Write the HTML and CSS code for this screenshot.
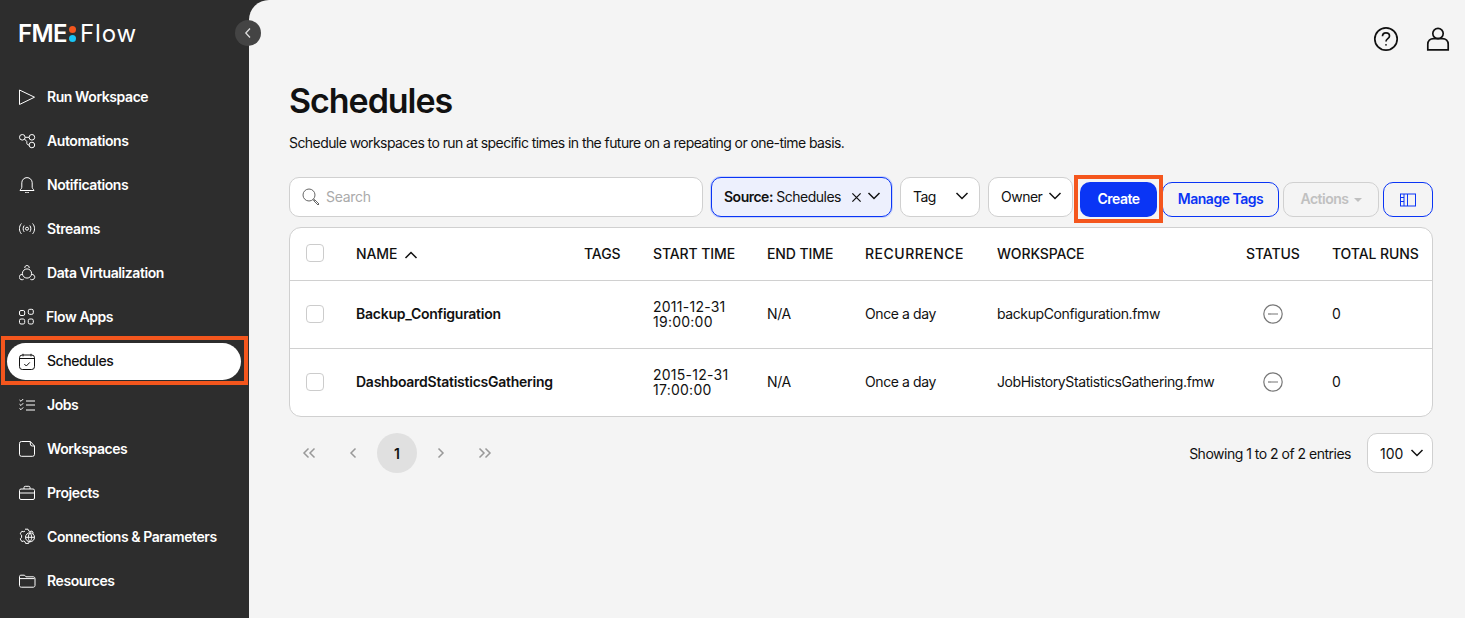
FILE: index.html
```html
<!DOCTYPE html>
<html lang="en">
<head>
    <meta charset="UTF-8">
    <title>Schedules - FME Flow</title>
    <link rel="stylesheet" href="styles.css">
</head>
<body>
    <aside class="sidebar">
        <div class="logo">
            <span class="logo-fme">FME</span>
            <span class="logo-dots"><i class="dot-orange"></i><i class="dot-cyan"></i></span>
            <span class="logo-flow">Flow</span>
        </div>
        <button class="collapse">
            <svg width="16" height="16" viewBox="0 0 16 16"><path d="M10 3.5 5.8 8l4.2 4.5"/></svg>
        </button>
        <nav class="nav">
            <a class="nav-item">
                <svg class="nav-icon" viewBox="0 0 18 18"><path d="M.5 3v14.500L15.500 10.200z"/></svg>
                Run Workspace
            </a>
            <a class="nav-item">
                <svg class="nav-icon" viewBox="0 0 18 18"><circle cx="3.300" cy="6.300" r="2.800"/><circle cx="12.900" cy="6.300" r="2.800"/><circle cx="12.900" cy="14" r="2.800"/><path d="M6.100 6.300h4M5.500 8 7.800 10.500v1.300c0 1.500.8 2.200 2.300 2.200"/></svg>
                Automations
            </a>
            <a class="nav-item">
                <svg class="nav-icon" viewBox="0 0 18 18"><path d="M1 15.500h14c-.3-1.300-1.600-1.500-1.800-3.200V7.800a5.200 5.200 0 0 0-10.400 0v4.500c-.2 1.700-1.500 1.900-1.800 3.200zM6 17.300c.8.800 3.200.8 4 0"/></svg>
                Notifications
            </a>
            <a class="nav-item">
                <svg class="nav-icon" viewBox="0 0 18 18"><circle cx="8" cy="9.700" r="1.500"/><path d="M5.200 6.500c-1.400 1.800-1.400 4.600 0 6.400M10.800 6.500c1.400 1.800 1.400 4.600 0 6.400M2.400 4.500c-2.600 3-2.600 7.400 0 10.400M13.600 4.500c2.600 3 2.600 7.400 0 10.400"/></svg>
                Streams
            </a>
            <a class="nav-item">
                <svg class="nav-icon" viewBox="0 0 18 18"><circle cx="8" cy="10.500" r="4.600"/><path d="M5.800 5c-.2-1.600 1-2.500 2.200-2.500s2.400.9 2.200 2.500M3.400 11.200C1.500 11.400 0 12.600.3 14.500c.3 2 2.600 3 4.400 1.700M12.600 11.200c1.900.2 3.400 1.400 3.100 3.300-.3 2-2.600 3-4.400 1.700"/></svg>
                Data Virtualization
            </a>
            <a class="nav-item nav-item-apps">
                <svg class="nav-icon" viewBox="0 0 18 18"><rect x=".5" y="3.500" width="5.200" height="5" rx="1.500"/><rect x="9.300" y="2.300" width="5" height="5" rx="1.500"/><rect x=".5" y="12" width="5.200" height="5" rx="1.500"/><rect x="9.300" y="12" width="5" height="5" rx="1.500"/></svg>
                Flow Apps
            </a>
            <div class="nav-mark">
                <a class="nav-item nav-item-active">
                    <svg class="nav-icon" viewBox="0 0 18 18"><rect x=".5" y="3" width="15" height="14.500" rx="2.800"/><path d="M.5 6.500h15M4 1.800v2.600M12 1.800v2.600M5.300 12l2 2 3.500-3.600"/></svg>
                    Schedules
                </a>
            </div>
            <a class="nav-item">
                <svg class="nav-icon" viewBox="0 0 18 18"><path d="m.5 5 1.500 1.300L4.200 4M.5 9.200 2 10.500l2.200-2.300M.5 13.400 2 14.700l2.200-2.300M7 6h9M7 10h9M7 15h9"/></svg>
                Jobs
            </a>
            <a class="nav-item">
                <svg class="nav-icon" viewBox="0 0 18 18"><path d="M2.500 2.500h8.800l4.200 4.500v8.300a2 2 0 0 1-2 2h-11a2 2 0 0 1-2-2V4.500a2 2 0 0 1 2-2zM11.300 2.500v2.500a2 2 0 0 0 2 2h2.200"/></svg>
                Workspaces
            </a>
            <a class="nav-item">
                <svg class="nav-icon" viewBox="0 0 18 18"><rect x=".5" y="6" width="15" height="10.500" rx="1.500"/><path d="M.5 10h15M5 6V4.500c0-.8.500-1.200 1.200-1.200h3.600c.7 0 1.200.4 1.200 1.200V6"/></svg>
                Projects
            </a>
            <a class="nav-item">
                <svg class="nav-icon" viewBox="0 0 18 18"><path d="M6 2.200h3l.6 1.600c.5.2 1 .4 1.400.7l2-.5 1.500 2.400M2.800 4.300l2 .4c.4-.3.7-.5 1.200-.7M2.800 4.300 1.200 6.800l1.400 1.400v2.400l-1.400 1.300 1.600 2.600 2-.5c.4.300.8.500 1.200.7l.6 1.700h3l.6-1.700"/><circle cx="11" cy="10.300" r="4.500"/><path d="M6.500 10.300h9M11 5.800c-2.200 2.600-2.200 6.400 0 9M11 5.800c2.200 2.600 2.200 6.400 0 9"/></svg>
                Connections &amp; Parameters
            </a>
            <a class="nav-item">
                <svg class="nav-icon" viewBox="0 0 18 18"><path d="M.5 5.500c0-.8.500-1.300 1.300-1.300h3.700l1.500 1.600h7.200c1.100 0 1.800.7 1.800 1.800v6.800c0 1.100-.7 1.800-1.800 1.800H2.300c-1.100 0-1.800-.7-1.800-1.800zM.5 7.600h15"/></svg>
                Resources
            </a>
        </nav>
    </aside>

    <main class="main">
        <header class="topbar">
            <svg class="top-icon" viewBox="0 0 26 26"><circle cx="13" cy="13" r="11.200"/><path d="M9.500 10.300c0-2.200 1.600-3.500 3.500-3.500s3.500 1.300 3.500 3.200c0 2.600-3.500 2.700-3.500 5.400"/><circle class="solid" cx="13" cy="18.800" r=".9"/></svg>
            <svg class="top-icon" viewBox="0 0 26 26"><circle cx="13" cy="7.500" r="5.200"/><path d="M2.800 23.800v-5.500c0-3.400 2.400-5.600 5.800-5.600h8.800c3.400 0 5.800 2.200 5.800 5.600v5.500z"/></svg>
        </header>

        <h1 class="title">Schedules</h1>
        <p class="subtitle">Schedule workspaces to run at specific times in the future on a repeating or one-time basis.</p>

        <div class="toolbar">
            <div class="search">
                <svg width="20" height="20" viewBox="0 0 20 20"><circle cx="8" cy="8" r="6"/><path d="m12.500 12.500 1.300 1.300M13.500 12.500l-1 1 4.500 4.500 1-1z"/></svg>
                <span>Search</span>
            </div>
            <div class="filter filter-active">
                <span class="filter-label"><b>Source:</b> Schedules</span>
                <svg class="clear" width="11" height="11" viewBox="0 0 12 12"><path d="m1.500 1.500 9 9M10.500 1.500l-9 9"/></svg>
                <svg class="chevron" width="14" height="8" viewBox="0 0 14 8"><path d="m1.500 1 5.500 5.500L12.500 1"/></svg>
            </div>
            <div class="filter filter-tag">
                <span class="filter-label">Tag</span>
                <svg class="chevron" width="14" height="8" viewBox="0 0 14 8"><path d="m1.500 1 5.500 5.500L12.500 1"/></svg>
            </div>
            <div class="filter filter-owner">
                <span class="filter-label">Owner</span>
                <svg class="chevron" width="14" height="8" viewBox="0 0 14 8"><path d="m1.500 1 5.500 5.500L12.500 1"/></svg>
            </div>
            <div class="create-mark">
                <button class="btn btn-primary">Create</button>
            </div>
            <button class="btn btn-outline btn-tags">Manage Tags</button>
            <button class="btn btn-disabled">Actions <i class="caret"></i></button>
            <button class="btn btn-outline btn-columns">
                <svg width="18" height="14" viewBox="0 0 18 14"><rect x="1.500" y="1" width="15" height="12"/><path d="M5 1v12M8.500 1v12M1.500 4.500H5M1.500 8.500H5"/></svg>
            </button>
        </div>

        <div class="table-wrap">
            <table class="table">
                <colgroup>
                    <col class="col-check"><col class="col-name"><col class="col-tags"><col class="col-start"><col class="col-end"><col class="col-rec"><col class="col-ws"><col class="col-status"><col>
                </colgroup>
                <thead>
                    <tr>
                        <th><span class="checkbox"></span></th>
                        <th>NAME <svg class="sort" width="14" height="8" viewBox="0 0 14 8"><path d="m1.500 7 5.500-5.500L12.500 7"/></svg></th>
                        <th>TAGS</th>
                        <th>START TIME</th>
                        <th>END TIME</th>
                        <th class="wide">RECURRENCE</th>
                        <th>WORKSPACE</th>
                        <th>STATUS</th>
                        <th>TOTAL RUNS</th>
                    </tr>
                </thead>
                <tbody>
                    <tr>
                        <td><span class="checkbox"></span></td>
                        <td class="name">Backup_Configuration</td>
                        <td></td>
                        <td class="time">2011-12-31<br>19:00:00</td>
                        <td>N/A</td>
                        <td>Once a day</td>
                        <td>backupConfiguration.fmw</td>
                        <td class="status"><svg width="20" height="20" viewBox="0 0 20 20"><circle cx="10" cy="10" r="9.200"/><path d="M5 10h10"/></svg></td>
                        <td>0</td>
                    </tr>
                    <tr>
                        <td><span class="checkbox"></span></td>
                        <td class="name">DashboardStatisticsGathering</td>
                        <td></td>
                        <td class="time">2015-12-31<br>17:00:00</td>
                        <td>N/A</td>
                        <td>Once a day</td>
                        <td>JobHistoryStatisticsGathering.fmw</td>
                        <td class="status"><svg width="20" height="20" viewBox="0 0 20 20"><circle cx="10" cy="10" r="9.200"/><path d="M5 10h10"/></svg></td>
                        <td>0</td>
                    </tr>
                </tbody>
            </table>
        </div>

        <div class="footer">
            <div class="pager">
                <span class="page-link"><svg width="14" height="12" viewBox="0 0 14 12"><path d="M6.500 1.500 2 6l4.500 4.500M12.500 1.500 8 6l4.500 4.500"/></svg></span>
                <span class="page-link"><svg width="14" height="12" viewBox="0 0 14 12"><path d="M9.500 1.500 5 6l4.500 4.500"/></svg></span>
                <span class="page-current">1</span>
                <span class="page-link"><svg width="14" height="12" viewBox="0 0 14 12"><path d="M4.500 1.500 9 6l-4.500 4.500"/></svg></span>
                <span class="page-link"><svg width="14" height="12" viewBox="0 0 14 12"><path d="M1.500 1.500 6 6l-4.500 4.500M7.500 1.500 12 6l-4.500 4.500"/></svg></span>
            </div>
            <div class="entries">
                <span>Showing 1 to 2 of 2 entries</span>
                <div class="page-size">
                    <span>100</span>
                    <svg class="chevron" width="14" height="8" viewBox="0 0 14 8"><path d="m1.500 1 5.500 5.500L12.500 1"/></svg>
                </div>
            </div>
        </div>
    </main>
</body>
</html>
```

FILE: styles.css
```css
* {
    box-sizing: border-box;
}

html, body {
    height: 100%;
}

body {
    margin: 0;
    display: flex;
    overflow: hidden;
    background-color: #2d2d2d;
    color: #111;
    font-family: 'Inter', 'Liberation Sans', sans-serif;
    font-size: 14px;
}

svg {
    fill: none;
    stroke: currentColor;
    flex-shrink: 0;
}

/* --- Sidebar --- */
.sidebar {
    position: relative;
    width: 249px;
    flex-shrink: 0;
    color: #fff;
}

.logo {
    display: flex;
    align-items: center;
    height: 20px;
    margin: 24px 0 0 18px;
    font-size: 24px;
    line-height: 20px;
}

.logo-fme {
    font-weight: 600;
    letter-spacing: -0.6px;
}

.logo-flow {
    font-weight: 400;
    letter-spacing: 0.9px;
}

.logo-dots {
    display: flex;
    flex-direction: column;
    gap: 2px;
    margin: 0 4px 0 2px;
}

.logo-dots i {
    display: block;
    width: 7px;
    height: 7px;
    border-radius: 50%;
}

.dot-orange {
    background-color: #f4561d;
}

.dot-cyan {
    background-color: #19c5f5;
}

.collapse {
    position: absolute;
    top: 20px;
    left: 235px;
    width: 26px;
    height: 26px;
    display: flex;
    align-items: center;
    justify-content: center;
    padding: 0;
    border: 0;
    border-radius: 50%;
    background-color: #444;
    color: #ddd;
    z-index: 2;
}

.collapse path {
    stroke-width: 1.300;
}

.nav {
    margin-top: 30px;
}

.nav-item {
    display: flex;
    align-items: center;
    gap: 10px;
    height: 44px;
    padding-left: 19px;
    color: #fff;
    font-size: 14px;
    font-weight: 600;
    letter-spacing: -0.42px;
}

.nav-item-apps {
    gap: 9px;
}

.nav-icon {
    width: 18px;
    height: 18px;
    stroke-width: 1;
}

.nav-mark {
    height: 49px;
    margin: -2px 1px -3px 1px;
    border: 4px solid #f4561d;
    padding: 3px 3px 0 2px;
}

.nav-item-active {
    height: 37px;
    padding-left: 12px;
    padding-bottom: 2px;
    border-radius: 19px;
    background-color: #fff;
    color: #111;
    font-weight: 500;
}

/* --- Main area --- */
.main {
    flex: 1;
    min-width: 0;
    padding: 0 32px 0 40px;
    border-top-left-radius: 20px;
    background-color: #f4f4f4;
}

.topbar {
    display: flex;
    justify-content: flex-end;
    gap: 26px;
    height: 76px;
    padding: 26px 0 0;
    margin-right: -18px;
}

.top-icon {
    width: 26px;
    height: 26px;
    stroke-width: 1.700;
}

.top-icon .solid {
    fill: currentColor;
    stroke: none;
}

.title {
    margin: 0;
    font-size: 34px;
    font-weight: 600;
    line-height: 50px;
    letter-spacing: -1.05px;
}

.subtitle {
    margin: 7px 0 0;
    font-size: 14px;
    line-height: 20px;
    letter-spacing: -0.57px;
}

/* --- Toolbar --- */
.toolbar {
    display: flex;
    align-items: flex-start;
    gap: 8px;
    margin-top: 24px;
    height: 50px;
}

.toolbar > * {
    flex-shrink: 0;
}

.search, .filter {
    display: flex;
    align-items: center;
    height: 40px;
    border: 1px solid #d0d0d0;
    border-radius: 10px;
    background-color: #fff;
}

.search {
    width: 414px;
    gap: 5px;
    padding-left: 11px;
    padding-bottom: 1px;
    color: #666;
}

.search svg {
    margin-top: 1px;
}

.search span {
    color: #aaa;
    letter-spacing: -0.3px;
}

.filter {
    padding: 0 10px 2px 12px;
    justify-content: space-between;
}

.filter-label {
    letter-spacing: -0.5px;
    white-space: nowrap;
}

.filter-active {
    width: 181px;
    border: 1.500px solid #0a35f5;
    background-color: #edf0fd;
    box-shadow: 0 0 0 1px #c9d3fb;
}

.filter-active b {
    font-weight: 600;
}

.filter-active .clear {
    margin-left: auto;
    margin-top: 2px;
    stroke-width: 1.400;
}

.filter-active .chevron {
    margin-left: 5px;
}

.filter-tag {
    width: 80px;
}

.filter-owner {
    width: 85px;
}

.chevron {
    stroke-width: 1.500;
}

.create-mark {
    width: 89px;
    height: 48px;
    margin: -2px -9px 0 -7px;
    border: 4px solid #f4561d;
    padding: 3px 2px 0 2px;
    position: relative;
    z-index: 1;
}

.btn {
    height: 35px;
    padding: 0 0 2px;
    border-radius: 10px;
    font-family: inherit;
    font-size: 14px;
    font-weight: 600;
    letter-spacing: -0.5px;
    margin-top: 5px;
}

.create-mark .btn {
    margin-top: 0;
}

.btn-primary {
    width: 77px;
    border: 0;
    background-color: #0a35f5;
    color: #fff;
}

.btn-outline {
    border: 1px solid #0a35f5;
    background-color: #f4f4f4;
    color: #0a35f5;
}

.btn-tags {
    width: 117px;
}

.btn-disabled {
    width: 96px;
    margin-left: -4px;
    border: 1px solid #d0d0d0;
    background-color: #f4f4f4;
    color: #c0c0c0;
}

.caret {
    display: inline-block;
    margin-left: 2px;
    vertical-align: 2px;
    border-left: 4px solid transparent;
    border-right: 4px solid transparent;
    border-top: 4px solid #c0c0c0;
}

.btn-columns {
    width: 50px;
    margin-left: -4px;
    padding: 0;
    display: flex;
    align-items: center;
    justify-content: center;
}

.btn-columns svg {
    stroke-width: 1;
}

/* --- Table --- */
.table-wrap {
    border: 1px solid #d0d0d0;
    border-radius: 12px;
    background-color: #fff;
    overflow: hidden;
}

.table {
    width: 100%;
    table-layout: fixed;
    border-collapse: collapse;
}

.col-check { width: 66px; }
.col-name { width: 228px; }
.col-tags { width: 69px; }
.col-start { width: 114px; }
.col-end { width: 98px; }
.col-rec { width: 132px; }
.col-ws { width: 249px; }
.col-status { width: 86px; }

.table th, .table td {
    padding: 0;
    text-align: left;
    vertical-align: middle;
    white-space: nowrap;
}

.table th {
    height: 52px;
    padding-bottom: 1px;
    font-size: 14px;
    font-weight: 500;
    letter-spacing: -0.1px;
    border-bottom: 1px solid #d0d0d0;
}

.table th.wide {
    letter-spacing: 0.5px;
}

.table td {
    height: 68px;
    line-height: 15px;
    letter-spacing: -0.4px;
    border-bottom: 1px solid #d0d0d0;
    padding-bottom: 1px;
}

.table tr:last-child td {
    border-bottom: 0;
}

.table th:first-child, .table td:first-child {
    padding-left: 16px;
}

.table td.name {
    font-weight: 600;
    letter-spacing: -0.25px;
}

.table td.time {
    letter-spacing: 0.25px;
}

.table td.status {
    padding-left: 17px;
    color: #777;
}

.status svg {
    display: block;
    stroke-width: 1.200;
}

.sort {
    margin-left: 3px;
    stroke-width: 1.500;
}

.checkbox {
    display: block;
    width: 18px;
    height: 18px;
    border: 1px solid #ccc;
    border-radius: 4px;
    background-color: #fff;
}

/* --- Footer --- */
.footer {
    display: flex;
    justify-content: space-between;
    align-items: center;
    margin-top: 16px;
}

.pager {
    display: flex;
    align-items: center;
    gap: 4px;
}

.page-link, .page-current {
    display: flex;
    align-items: center;
    justify-content: center;
    width: 40px;
    height: 40px;
    border-radius: 50%;
}

.page-link {
    color: #999;
}

.page-link svg {
    stroke-width: 1.500;
}

.page-current {
    background-color: #e0e0e0;
    font-weight: 600;
}

.entries {
    display: flex;
    align-items: center;
    gap: 16px;
    letter-spacing: -0.5px;
}

.page-size {
    display: flex;
    align-items: center;
    justify-content: space-between;
    width: 66px;
    height: 40px;
    padding: 0 8px 0 12px;
    border: 1px solid #d0d0d0;
    border-radius: 10px;
    background-color: #fff;
    letter-spacing: 0;
}
```
